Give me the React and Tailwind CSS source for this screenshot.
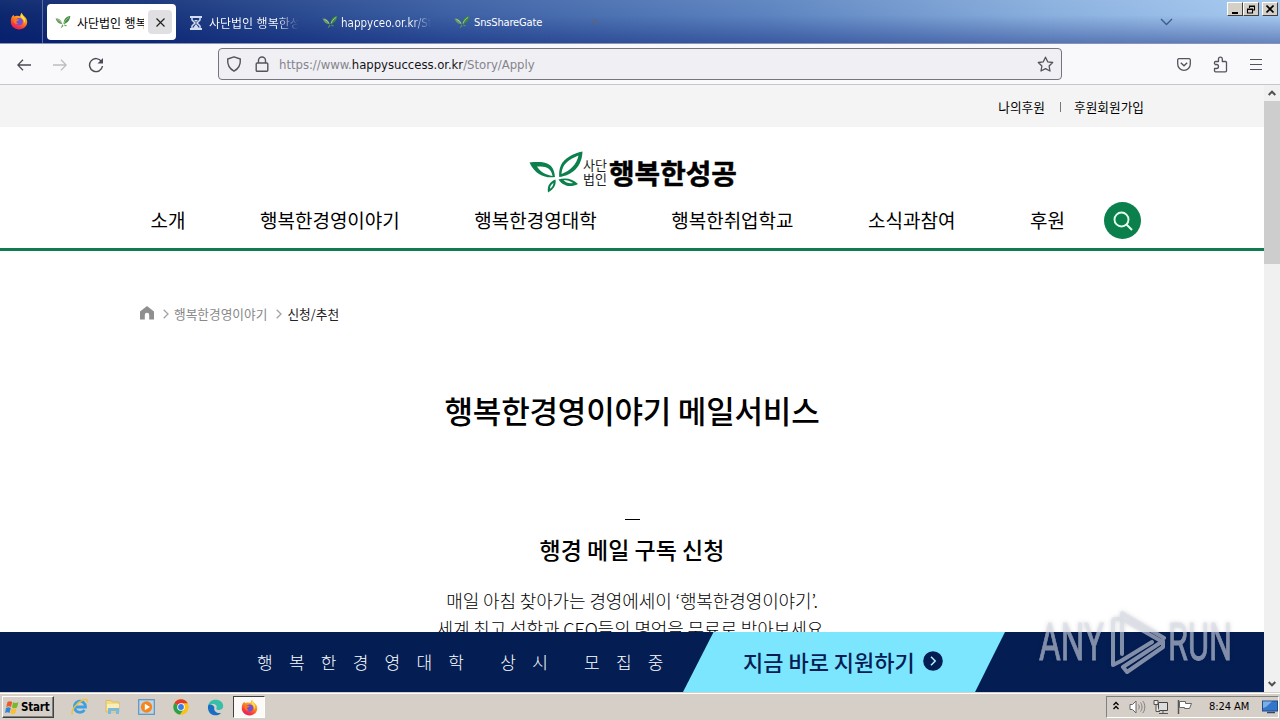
import React from 'react';

const KR = "font-['Noto_Sans_CJK_KR',sans-serif]";
const UI = "font-['DejaVu_Sans_Condensed','DejaVu_Sans','Noto_Sans_CJK_KR',sans-serif]";

function Firefox({ size }) {
  return (
    <svg width={size} height={size} viewBox="0 0 18 18" className="shrink-0">
      <defs>
        <linearGradient id="fx" x1="0.8" y1="0" x2="0.3" y2="1">
          <stop offset="0" stopColor="#ffd53a" />
          <stop offset="0.45" stopColor="#ff8a1c" />
          <stop offset="0.8" stopColor="#f6353f" />
          <stop offset="1" stopColor="#dc1d6c" />
        </linearGradient>
      </defs>
      <path d="M2 4.6 3.5 2.8 4.3 4.5C5.4 3.7 6.4 3.5 7.6 3.7L10 4.2C10.3 2.6 11 1.4 11.8.7c.4 1.8 1.5 2.6 2.7 3.7C16.300 6 17.200 7.500 17.200 10c0 4.200-3.700 7.400-8.200 7.400S.8 14 .8 9.800C.8 7.600 1.300 6 2 4.600z" fill="url(#fx)" />
      <path d="M12 2.200c.4 1.700 2 2.600 2.700 4.300.7 1.800.3 3.600-.4 4.500.1-2.600-1.400-4.300-2.800-5.400-.8-.7-.2-2.500.5-3.400z" fill="#ffe34d" />
      <circle cx="9.200" cy="9.600" r="3.700" fill="#7350d8" />
      <path d="M3.500 8.200c1.300-1.400 3.700-.8 5.600-.8-.4 1.200-2.200 1.200-2.600 2.100-.4 1 .5 2 1.700 2.300-2.300 1.100-4.700-1-4.700-3.600z" fill="#ff7a22" />
    </svg>
  );
}

function Leaf() {
  return (
    <svg width="16" height="15" viewBox="0 0 16 15" className="shrink-0">
      <path d="M.5 3.500C4 3.200 6.600 5 7.300 9.300 4 9.200 1.600 7 .5 3.500z" fill="#6b9a63" />
      <path d="M15.300 1C11 1.400 8.500 4.500 8.600 9c3.700-.5 6.400-4 6.700-8z" fill="#3f8a3f" />
      <path d="M2.500 4.500c2 .6 3.700 2 4.500 4M14 2.500C11.500 4 9.800 6 9 8.500" stroke="#b7d3a8" strokeWidth=".8" fill="none" />
      <path d="M7.600 9.200 5.500 13.500 8.500 11z M9 9.300 12.500 11 9.800 11.200z" fill="#5b9a4c" />
    </svg>
  );
}

function Chevron({ className }) {
  return (
    <svg width="6" height="10" viewBox="0 0 6 10" className={className}>
      <path d="M.7.7 5 5 .7 9.300" stroke="#a3a3a3" strokeWidth="1.300" fill="none" />
    </svg>
  );
}

function WinButton({ children }) {
  return (
    <div className="flex h-[14px] w-4 items-center justify-center border border-t-white border-l-white border-r-[#404040] border-b-[#404040] bg-[#d4d0c8]">
      {children}
    </div>
  );
}

function TabBar() {
  return (
    <div className={`flex h-[43px] w-full bg-[linear-gradient(to_bottom,rgba(255,255,255,0.04),rgba(255,255,255,0)_35%,rgba(0,20,110,0.38)),linear-gradient(to_right,#0c276e_0%,#18357c_12%,#3c60a4_35%,#5d84c0_60%,#8ab0de_82%,#a6caf0_100%)] text-[11px] leading-4 ${UI}`}>
      <div className="flex w-[43px] justify-center border-r border-[#5b6ea4] pt-3 pr-1">
        <Firefox size={18} />
      </div>
      <div className="mt-1 ml-1 flex h-9 w-[129px] items-center rounded bg-white pl-2 text-black">
        <Leaf />
        <span className="ml-1.5 w-[67px] overflow-hidden pt-[3px] text-[12px] whitespace-nowrap">사단법인 행복한</span>
        <div className="ml-[4px] flex h-6 w-6 items-center justify-center rounded bg-[#e0e0e2]">
          <svg width="9" height="9" viewBox="0 0 9 9"><path d="M.5.5l8 8M8.500.5l-8 8" stroke="#222" strokeWidth="1.200" /></svg>
        </div>
      </div>
      <div className="ml-[14px] flex h-[45px] w-[125px] items-center text-white">
        <svg width="12" height="14" viewBox="0 0 12 14" className="shrink-0">
          <path d="M0 0h12v2H0zM0 12h12v2H0z" fill="#d3dcf0" />
          <path d="M2 2v2l3 3-3 3v2M10 2v2L7 7l3 3v2" fill="none" stroke="#d3dcf0" strokeWidth="1.500" />
          <path d="M4 4h4L6 6zM3 12l3-4 3 4z" fill="#d3dcf0" />
        </svg>
        <span className="ml-[7px] w-[90px] overflow-hidden bg-gradient-to-r from-white from-75% to-transparent bg-clip-text pt-[3px] text-[12px] whitespace-nowrap text-transparent">사단법인 행복한성공</span>
      </div>
      <div className="ml-[7px] flex h-[45px] w-[132px] items-center text-white">
        <Leaf />
        <span className="ml-[3px] w-[90px] overflow-hidden bg-gradient-to-r from-white from-78% to-transparent bg-clip-text text-[11.500px] whitespace-nowrap text-transparent">happyceo.or.kr/Story</span>
      </div>
      <div className="flex h-[45px] items-center text-white">
        <Leaf />
        <span className="ml-[4px] text-[11px] tracking-[-0.150px] whitespace-nowrap">SnsShareGate</span>
      </div>
      <div className="ml-[50px] h-1.5 w-1.5 self-center rounded-full bg-[#65636f]/40" />
      <div className="ml-auto flex">
        <svg width="13" height="8" viewBox="0 0 13 8" className="mt-[18px] mr-[54px]"><path d="M1 1l5.500 5.500L12 1" stroke="#3d5d8d" strokeWidth="1.400" fill="none" /></svg>
        <div className="mt-0.5 mr-[2px] flex">
          <WinButton><svg width="12" height="10" viewBox="0 0 12 10"><path d="M3 8h6v2H3z" /></svg></WinButton>
          <WinButton><svg width="10" height="9" viewBox="0 0 10 9"><path d="M3.500 3V1h5v4H7M3.500 1.500h5M1.500 4h5v4h-5zM1.500 4.500h5" fill="none" stroke="#000" strokeWidth="1.100" /></svg></WinButton>
          <div className="ml-[3px]"><WinButton><svg width="8" height="8" viewBox="0 0 8 8"><path d="M.5.5l7 7M7.500.5l-7 7" stroke="#000" strokeWidth="1.600" /></svg></WinButton></div>
        </div>
      </div>
    </div>
  );
}

function Toolbar() {
  return (
    <div className="flex h-[42px] w-full items-center border-t border-b border-t-[#8a95b5] border-b-[#c6c6ca] bg-[#f9f9fb] pl-[17px]">
      <svg width="14" height="12" viewBox="0 0 14 12" className="mt-px"><path d="M14 6H1M6 .7.8 6 6 11.300" fill="none" stroke="#4b4a55" strokeWidth="1.300" /></svg>
      <svg width="14" height="12" viewBox="0 0 14 12" className="mt-px ml-[22px]"><path d="M0 6h13M8 .7 13.200 6 8 11.300" fill="none" stroke="#bdbdc2" strokeWidth="1.300" /></svg>
      <svg width="16" height="16" viewBox="0 0 16 16" className="mt-px ml-[21px]">
        <path d="M13.500 4.500A6.500 6.500 0 1 0 14.500 9" fill="none" stroke="#4b4a55" strokeWidth="1.400" />
        <path d="M15 1v5.500H9.500z" fill="#4b4a55" />
      </svg>
      <div className="ml-[114px] flex h-8 w-[844px] items-center rounded border border-[#76757d] bg-[#f0f0f4] pl-[7px]">
        <svg width="16" height="16" viewBox="0 0 16 16"><path d="M8 .8 14.300 3c.4 5-1.300 9.500-6.300 12.200C3 12.500 1.300 8 1.700 3z" fill="none" stroke="#55545e" strokeWidth="1.400" strokeLinejoin="round" /></svg>
        <svg width="14" height="16" viewBox="0 0 14 16" className="ml-[13px]"><rect x="1.200" y="7" width="11.600" height="8.200" rx="1" fill="none" stroke="#55545e" strokeWidth="1.400" /><path d="M3.500 7V4.500a3.500 3.500 0 0 1 7 0V7" fill="none" stroke="#55545e" strokeWidth="1.400" /></svg>
        <span className={`ml-[10px] pt-px text-[13px] leading-4 tracking-[-0.030px] whitespace-nowrap text-[#85848c] ${UI}`}>https://www.<span className="text-[#15141a]">happysuccess.or.kr</span>/Story/Apply</span>
        <svg width="17" height="17" viewBox="0 0 17 17" className="mr-[7px] ml-auto"><path d="M8.500 1.200 10.700 5.800l5 .7-3.600 3.500.9 5-4.500-2.400L4 15l.9-5L1.300 6.500l5-.7z" fill="none" stroke="#55545e" strokeWidth="1.300" strokeLinejoin="round" /></svg>
      </div>
      <svg width="14" height="13" viewBox="0 0 14 13" className="ml-[115px]"><path d="M2 .7h10a1.300 1.300 0 0 1 1.300 1.300v4a6.300 6.300 0 0 1-12.600 0V2A1.300 1.300 0 0 1 2 .7z" fill="none" stroke="#55545e" strokeWidth="1.300" /><path d="M3.800 4.700 7 7.700l3.200-3" fill="none" stroke="#55545e" strokeWidth="1.400" /></svg>
      <svg width="15" height="17" viewBox="0 0 15 17" className="ml-[22px]"><path d="M1.500 8V6.500c0-.7.300-1 1-1h3V3a1.900 1.900 0 0 1 3.800 0v2.500h3.200c.7 0 1 .4 1 1v8.300c0 .6-.3 1-1 1H2.500c-.6 0-1-.4-1-1v-2.300h2a2 2 0 0 0 0-4H1.500" fill="none" stroke="#55545e" strokeWidth="1.300" strokeLinejoin="round" /></svg>
      <svg width="12" height="11" viewBox="0 0 12 11" className="ml-[22px]"><path d="M0 .5h12M0 5.500h12M0 10.500h12" stroke="#55545e" strokeWidth="1" /></svg>
    </div>
  );
}

function Logo() {
  return (
    <div className="flex h-[42px] w-[208px] items-center">
      <svg width="54" height="42" viewBox="0 0 54 42" className="shrink-0">
        <path fillRule="evenodd" d="M.5 11.500C8 11 15 10.500 20 13.500c4 2.500 5.500 7 6 12.500C17 27.500 6 24 .5 11.500zM8 15.500c3.500 5.500 9 8.500 15.500 9.500-.5-4-2.500-7-5.500-8.300-3-1.300-6.500-1.200-10-1.200z" fill="#0c804c" />
        <path fillRule="evenodd" d="M53.500.5C44 2.500 35.500 7 32 14c-1.800 4-2 8-1.800 12C43 24.500 53 16 53.500.5zM49.500 4.500c-2 9-8 15-17 18.500.3-3.500 1-6 2.500-8.500 3-4.500 8.500-7.500 14.500-10z" fill="#0c804c" />
        <path fillRule="evenodd" d="M26.500 28.500c-5.500 2-8.500 6-7.500 13 5.500-3 8.500-7.500 7.500-13zm-2 3.500c-.3 2.600-1.600 4.500-3.500 5.800 0-2.600 1.300-4.500 3.500-5.800z" fill="#0c804c" />
        <path fillRule="evenodd" d="M29.500 28.500c7-2.500 15-.5 19.500 4.500-7.500 4-15.500 2-19.500-4.500zm5 .5c2.500 3 6 3.800 9.500 3-2.700-2-6-3-9.500-3z" fill="#0c804c" />
      </svg>
      <div className={`flex w-[25px] shrink-0 flex-col text-[13px] leading-[14px] text-[#222] ${KR}`}>
        <span>사단</span>
        <span>법인</span>
      </div>
      <span className={`ml-[1px] text-[27.800px] leading-[42px] font-bold whitespace-nowrap text-black [-webkit-text-stroke:0.500px_#000] ${KR}`}>행복한성공</span>
    </div>
  );
}

const NAV = ['소개', '행복한경영이야기', '행복한경영대학', '행복한취업학교', '소식과참여', '후원'];

function Page() {
  return (
    <div className={`flex h-[607px] w-[1264px] flex-col bg-white text-black ${KR}`}>
      <div className="flex h-[42px] shrink-0 items-center justify-end bg-[#f4f4f4] pt-px pr-[120px] text-[12.700px] leading-4 whitespace-nowrap">
        <span>나의후원</span>
        <span className="mr-[13px] ml-[15px] h-[10px] w-px bg-[#777]" />
        <span>후원회원가입</span>
      </div>
      <header className="flex h-[124px] shrink-0 flex-col border-b-[3px] border-[#0f7b51]">
        <div className="mt-6 ml-[529px]"><Logo /></div>
        <div className="flex h-[55px] items-center pl-[150.500px]">
          <nav className="flex gap-[74.500px] pb-[2px] text-[19px] leading-6 whitespace-nowrap">
            {NAV.map((label) => <span key={label}>{label}</span>)}
          </nav>
          <div className="ml-[39.500px] flex h-[37px] w-[37px] items-center justify-center rounded-full bg-[#0c804c]">
            <svg width="20" height="20" viewBox="0 0 20 20"><circle cx="8.500" cy="8.500" r="7" fill="none" stroke="#e3fff0" strokeWidth="1.900" /><path d="M13.500 13.500 19 19" stroke="#e3fff0" strokeWidth="1.900" /></svg>
          </div>
        </div>
      </header>
      <div className="mt-[54px] flex h-4 shrink-0 items-center pl-[140px] text-[12.700px] leading-4 whitespace-nowrap">
        <svg width="14" height="14" viewBox="0 0 14 14"><path d="M7 0 0 5.500V13.500h4.800V9a2.200 2.200 0 0 1 4.400 0v4.500H14V5.500z" fill="#8f8f8f" /></svg>
        <Chevron className="mt-px ml-[9px]" />
        <span className="ml-[5px] pt-[2px] text-[#888]">행복한경영이야기</span>
        <Chevron className="mt-px ml-[9px]" />
        <span className="ml-[5px] pt-[2px] text-[#222]">신청/추천</span>
      </div>
      <main className="flex min-h-0 flex-1 flex-col items-center overflow-hidden whitespace-nowrap">
        <h1 className="mt-[69px] text-[31px] leading-[40px] font-medium tracking-[-0.200px]">행복한경영이야기 메일서비스</h1>
        <div className="mt-[89px] h-px w-[15px] shrink-0 bg-black" />
        <h2 className="mt-[13px] text-[23px] leading-[32px] font-medium">행경 메일 구독 신청</h2>
        <p className="mt-[21px] text-center text-[18px] leading-7 font-light tracking-[-0.110px]">
          매일 아침 찾아가는 경영에세이 ‘행복한경영이야기’.<br />
          세계 최고 석학과 CEO들의 명언을 무료로 받아보세요.
        </p>
      </main>
      <div className="relative flex h-[60px] shrink-0 items-center bg-[#041e54]">
        <span className="ml-[257px] w-[426px] text-[17px] leading-6 font-light tracking-[16.250px] whitespace-nowrap text-white">행복한경영대학 상시 모집중</span>
        <div className="flex h-[60px] w-[322px] items-center bg-[#7ce6ff] pb-[3px] pl-[60px] [clip-path:polygon(9.500%_0,100%_0,90.700%_100%,0_100%)]">
          <span className="w-[180px] text-[22px] leading-7 font-medium whitespace-nowrap text-[#041e54]">지금 바로 지원하기</span>
          <svg width="20" height="20" viewBox="0 0 20 20"><circle cx="10" cy="10" r="9.800" fill="#041e54" /><path d="M8 5.800 12.200 10 8 14.200" fill="none" stroke="#b5f0ff" strokeWidth="1.500" /></svg>
        </div>
        <svg width="200" height="68" viewBox="0 0 200 68" className="absolute top-[-26px] left-[1036px] drop-shadow-[0_0_2px_rgba(0,0,0,0.250)]">
          <g fill="#d7dce8" stroke="#d7dce8" strokeWidth=".9" opacity=".6" fontFamily="'Roboto',sans-serif" fontSize="52">
            <text x="3" y="53.500" textLength="65" lengthAdjust="spacingAndGlyphs">ANY</text>
            <text x="132" y="53.500" textLength="64" lengthAdjust="spacingAndGlyphs">RUN</text>
          </g>
          <g fill="none" stroke="#d7dce8" opacity=".6" strokeWidth="4" strokeLinejoin="round" strokeLinecap="round">
            <path d="M83 13h-3c-2 0-3 1-3 3v43l8-4 31-19" />
            <path d="M86 48V7l42 25" />
            <path d="M90 15l35 20" />
            <path d="M87 61l4 5 36-25v-6L87 61" />
          </g>
        </svg>
      </div>
    </div>
  );
}

function Scrollbar() {
  return (
    <div className="flex h-[607px] w-4 flex-col items-center bg-[#f0f0f0]">
      <svg width="8" height="6" viewBox="0 0 8 6" className="mt-[5px]"><path d="M.7 5 4 1.700 7.300 5" fill="none" stroke="#505050" strokeWidth="2" /></svg>
      <div className="mt-[5px] h-[163px] w-4 bg-[#cdcdcd]" />
      <svg width="8" height="6" viewBox="0 0 8 6" className="mt-auto mb-[5px]"><path d="M.7 1 4 4.300 7.300 1" fill="none" stroke="#505050" strokeWidth="2" /></svg>
    </div>
  );
}

function Taskbar() {
  return (
    <div className={`flex h-7 w-full items-center border-t border-[#d4d0c8] bg-[#d6cfc7] pt-px text-black shadow-[inset_0_1px_0_#fff] ${UI}`}>
      <div className="ml-[2px] flex h-[22px] w-[52px] items-center border border-t-white border-l-white border-r-[#404040] border-b-[#404040] bg-[#d6cfc7] pl-[2px] shadow-[inset_-1px_-1px_0_#808080]">
        <svg width="15" height="15" viewBox="0 0 15 15" className="shrink-0">
          <path d="M2.500 2C4 1 5.500 1 7.200 2L6 7C4.500 6 3 6 1.200 7z" fill="#ee5a24" />
          <path d="M8 2.300c1.600 1 3.200 1 5.500 0L12 7.500c-1.700 1-3.400 1-5 0z" fill="#78b82a" />
          <path d="M1 8c1.600-1 3.200-1 4.800 0L4.500 13C3 12 1.500 12 0 13z" fill="#2f86d6" />
          <path d="M6.600 8.300c1.600 1 3.200 1 5 0L10.300 13.300c-1.700 1-3.400 1-5 0z" fill="#fbc02d" />
        </svg>
        <span className="ml-[1px] text-[11.500px] leading-4 font-bold tracking-[-0.200px]">Start</span>
      </div>
      <svg width="18" height="18" viewBox="0 0 18 18" className="ml-[17px]">
        <path d="M13.500 12A5.600 5.600 0 1 1 14.500 9H4.500" fill="none" stroke="#3da0e3" strokeWidth="2.800" />
        <path d="M1.500 16.500C-1 13 6 4.500 12 2c3-1.200 4.800-.7 4 2" fill="none" stroke="#f0c23a" strokeWidth="1.500" />
      </svg>
      <svg width="16" height="16" viewBox="0 0 16 16" className="ml-[16px]">
        <path d="M1 1.500h5l1 1.500h7v10H1z" fill="#f3dc83" stroke="#d8b352" strokeWidth=".7" />
        <path d="M2 5h12v5H2z" fill="#f9edb9" />
        <path d="M3 15V9h11v6h-3v-3H6v3z" fill="#7bb9df" />
      </svg>
      <svg width="17" height="16" viewBox="0 0 17 16" className="ml-[17px]">
        <rect x=".7" y=".7" width="15.600" height="14.600" fill="#bfd6ea" stroke="#5e93bd" strokeWidth="1.200" />
        <circle cx="8.500" cy="8" r="5.700" fill="#f3861d" /><path d="M6.800 4.800 12 8l-5.200 3.200z" fill="#fff" />
      </svg>
      <svg width="16" height="16" viewBox="0 0 16 16" className="ml-[18px]">
        <circle cx="8" cy="8" r="7.700" fill="#fbc116" />
        <path d="M8 8 1.300 4.200A7.700 7.700 0 0 1 14.700 4.200H8z" fill="#e33b2e" />
        <path d="M8 8 1.300 4.200A7.700 7.700 0 0 0 7 15.600L11 9.500z" fill="#2ca14c" />
        <circle cx="8" cy="8" r="3.800" fill="#fff" /><circle cx="8" cy="8" r="2.900" fill="#3b7de8" />
      </svg>
      <svg width="17" height="17" viewBox="0 0 17 17" className="ml-[18px]">
        <path d="M1 7C2 2.500 5 .7 8.700.7c4.300 0 7.500 2.600 7.500 6.300 0 3-2.600 4-4.700 4-2 0-2.600-.8-2-2 .9-2-.8-4-3.500-4C3.500 5 1.600 6 1 7z" fill="#37bfa9" />
        <path d="M1 7C.4 13 4 16.300 8.700 16.300c2.300 0 4-.9 5.300-2.300-4 .6-7.500-1.500-6.700-6C5 5 2 5 1 7z" fill="#176fc4" />
      </svg>
      <div className="ml-[9px] flex h-[22px] w-8 items-center justify-center border border-t-[#404040] border-l-[#404040] border-r-white border-b-white bg-[#fbfaf9]">
        <Firefox size={17} />
      </div>
      <div className="mr-[1px] ml-auto flex h-[22px] w-[173px] items-center border border-t-[#808080] border-l-[#808080] border-r-white border-b-white pl-[6px]">
        <svg width="6" height="9" viewBox="0 0 6 9" className="mb-1"><path d="M.5 4 3 1.500 5.500 4M.5 8 3 5.500 5.500 8" fill="none" stroke="#000" strokeWidth="1.300" /></svg>
        <svg width="17" height="14" viewBox="0 0 17 14" className="ml-[10px]"><path d="M1 4.500h2.500L7 1v12L3.500 9.500H1z" fill="#fff" stroke="#666" /><path d="M9.500 4.500c1 1.500 1 3.500 0 5M11.500 2.500c2 2.500 2 6.500 0 9M13.800 1c2.700 3.500 2.700 8.500 0 12" fill="none" stroke="#777" strokeWidth=".9" /></svg>
        <svg width="16" height="16" viewBox="0 0 16 16" className="ml-[7px]"><path d="M5.500 3.500h9v8h-9z" fill="#ddd" stroke="#444" /><path d="M1 1.500h4v4H1zM3 5.500v7h4M6 14.500h9M10 11.500v3" fill="#fff" fillOpacity=".6" stroke="#555" /></svg>
        <svg width="16" height="16" viewBox="0 0 16 16" className="ml-[8px]"><path d="M1.500 1v14" stroke="#555" strokeWidth="1.500" /><path d="M2.500 2.500h6v2h6l-2 5H7.500v-1h-5z" fill="#fff" stroke="#666" /></svg>
        <span className="ml-[16px] text-[11px] leading-4 tracking-[-0.050px] whitespace-nowrap">8:24 AM</span>
        <svg width="16" height="14" viewBox="0 0 16 14" className="ml-auto"><rect x=".5" y="1" width="15" height="10" fill="#3476c9" stroke="#234b8b" /><path d="M1 1.500h9L4 7 1 8z" fill="#79b0e8" /><path d="M5 12.500h8" stroke="#2b4875" strokeWidth="1.500" /></svg>
      </div>
    </div>
  );
}

export default function App() {
  return (
    <div className="flex h-[720px] w-[1280px] flex-col overflow-hidden">
      <TabBar />
      <Toolbar />
      <div className="flex h-[607px]">
        <Page />
        <Scrollbar />
      </div>
      <Taskbar />
    </div>
  );
}
